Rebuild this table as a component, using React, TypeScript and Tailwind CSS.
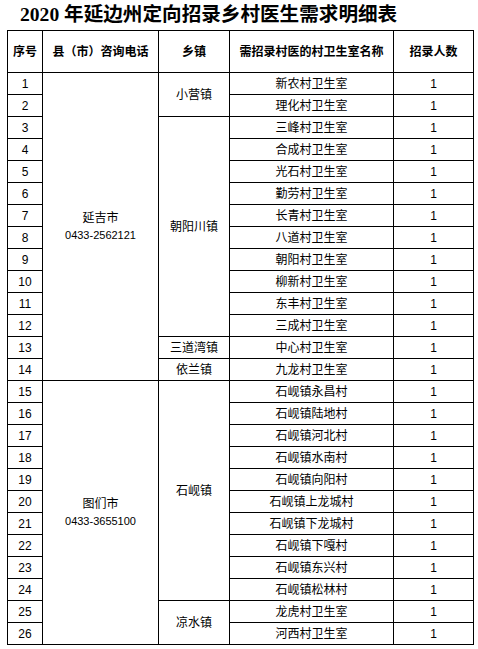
const rows: { no: number; name: string }[] = [
  "新农村卫生室",
  "理化村卫生室",
  "三峰村卫生室",
  "合成村卫生室",
  "光石村卫生室",
  "勤劳村卫生室",
  "长青村卫生室",
  "八道村卫生室",
  "朝阳村卫生室",
  "柳新村卫生室",
  "东丰村卫生室",
  "三成村卫生室",
  "中心村卫生室",
  "九龙村卫生室",
  "石岘镇永昌村",
  "石岘镇陆地村",
  "石岘镇河北村",
  "石岘镇水南村",
  "石岘镇向阳村",
  "石岘镇上龙城村",
  "石岘镇下龙城村",
  "石岘镇下嘎村",
  "石岘镇东兴村",
  "石岘镇松林村",
  "龙虎村卫生室",
  "河西村卫生室",
].map((name, i) => ({ no: i + 1, name }));

// town cells keyed by the row where they start
const towns: Record<number, { name: string; span: number }> = {
  1: { name: "小营镇", span: 2 },
  3: { name: "朝阳川镇", span: 10 },
  13: { name: "三道湾镇", span: 1 },
  14: { name: "依兰镇", span: 1 },
  15: { name: "石岘镇", span: 10 },
  25: { name: "凉水镇", span: 2 },
};

const counties: Record<number, { name: string; phone: string; span: number }> = {
  1: { name: "延吉市", phone: "0433-2562121", span: 14 },
  15: { name: "图们市", phone: "0433-3655100", span: 12 },
};

const cell = "border border-black text-center align-middle p-0";

export default function App() {
  return (
    <div
      className="w-[478px] h-[649px] bg-white text-black overflow-hidden"
      style={{ fontFamily: '"Liberation Sans", "Noto Sans CJK SC", sans-serif' }}
    >
      <h1
        className="h-[30px] pl-[20px] text-[19.6px] leading-[30px] font-bold whitespace-nowrap"
        style={{ fontFamily: '"Liberation Serif", "Noto Sans CJK SC", serif' }}
      >
        2020 年延边州定向招录乡村医生需求明细表
      </h1>
      <table className="ml-[7px] w-[466px] table-fixed border-collapse text-[12px] leading-[14px]">
        <colgroup>
          <col className="w-[35px]" />
          <col className="w-[116px]" />
          <col className="w-[71px]" />
          <col className="w-[164px]" />
          <col className="w-[80px]" />
        </colgroup>
        <thead>
          <tr className="h-[42px] font-bold">
            <th className={cell}>序号</th>
            <th className={cell}>县（市）咨询电话</th>
            <th className={cell}>乡镇</th>
            <th className={cell}>需招录村医的村卫生室名称</th>
            <th className={cell}>招录人数</th>
          </tr>
        </thead>
        <tbody>
          {rows.map((r) => (
            <tr key={r.no} className="h-[22px]">
              <td className={cell}>{r.no}</td>
              {counties[r.no] && (
                <td className={cell} rowSpan={counties[r.no].span}>
                  <div className="leading-[17px]">{counties[r.no].name}</div>
                  <div className="text-[11px] leading-[16px]">{counties[r.no].phone}</div>
                </td>
              )}
              {towns[r.no] && (
                <td className={cell} rowSpan={towns[r.no].span}>
                  {towns[r.no].name}
                </td>
              )}
              <td className={cell}>{r.name}</td>
              <td className={cell}>1</td>
            </tr>
          ))}
        </tbody>
      </table>
    </div>
  );
}
